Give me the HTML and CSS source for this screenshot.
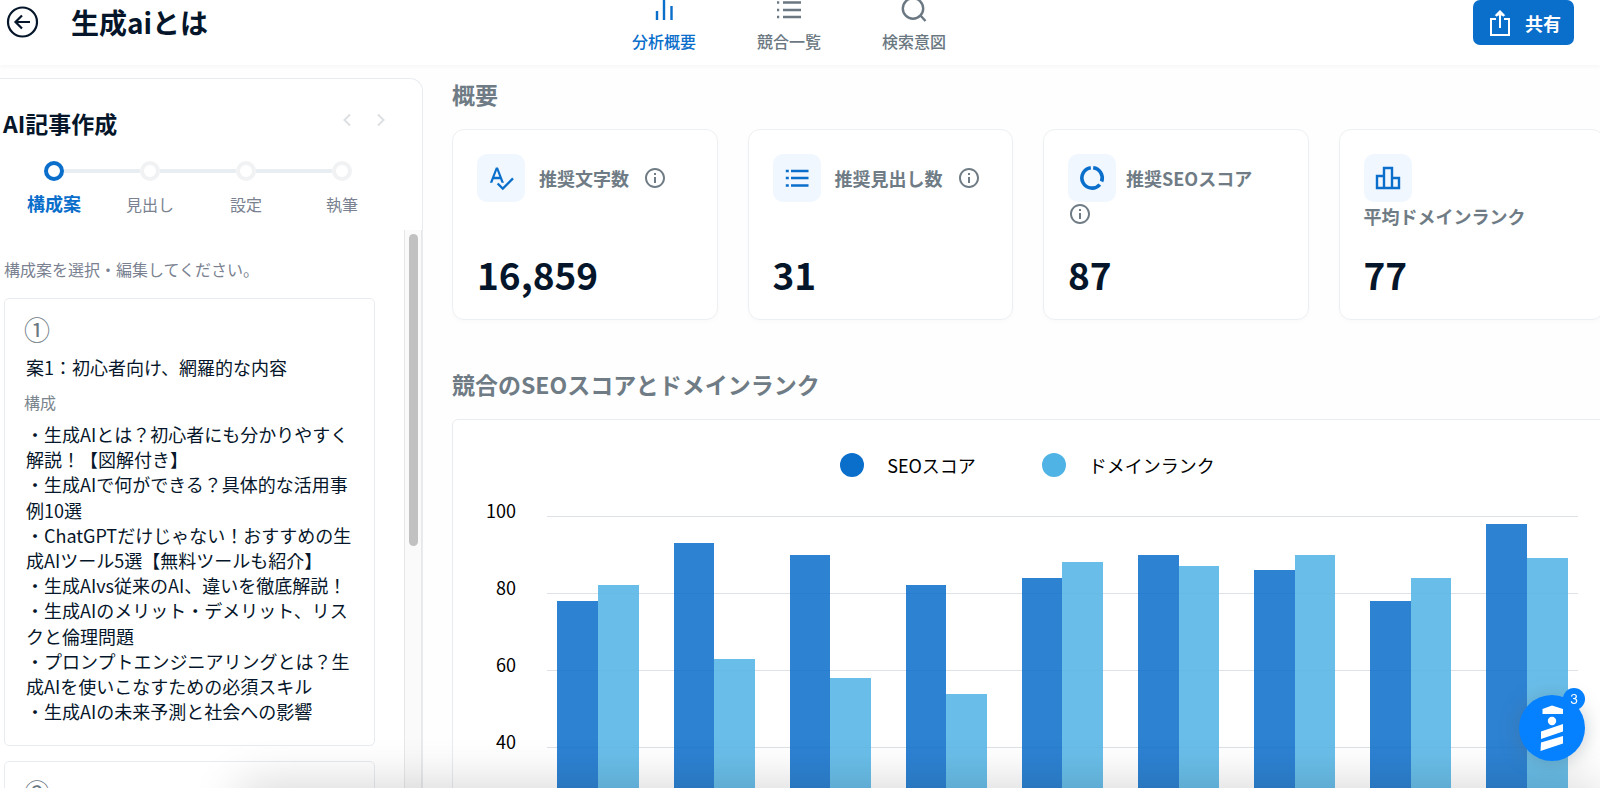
FILE: index.html
```html
<!DOCTYPE html>
<html lang="ja">
<head>
<meta charset="utf-8">
<title>生成aiとは</title>
<link rel="stylesheet" href="styles.css">
</head>
<body>
<header class="header">
  <div class="header-left">
    <button class="icon-button" aria-label="戻る">
      <svg width="36" height="36" viewBox="0 0 36 36" fill="none" stroke="currentColor" stroke-width="2.200"><circle cx="18.500" cy="18" r="14.500"/><path d="M26 18H11.500M18 11.500 11.500 18l6.500 6.500"/></svg>
    </button>
    <h1 class="title">生成aiとは</h1>
  </div>
  <nav class="tabs">
    <a class="tab tab-active" href="#overview">
      <svg width="32" height="32" viewBox="0 0 32 32" fill="none" stroke="currentColor" stroke-width="2.400"><path d="M9 18v9M16 4v23M23.500 13v14"/></svg>
      分析概要
    </a>
    <a class="tab" href="#competitors">
      <svg width="32" height="32" viewBox="0 0 32 32" fill="none" stroke="currentColor" stroke-width="2.400"><path d="M10 9.500h18M10 17h18M10 24h18M4 9.500h2.200M4 17h2.200M4 24h2.200"/></svg>
      競合一覧
    </a>
    <a class="tab" href="#intent">
      <svg width="32" height="32" viewBox="0 0 32 32" fill="none" stroke="currentColor" stroke-width="2.400"><circle cx="15" cy="15.500" r="10.200"/><path d="m22 22 5.500 6"/></svg>
      検索意図
    </a>
  </nav>
  <button class="share">
    <svg width="24" height="28" viewBox="0 0 24 28" fill="none" stroke="currentColor" stroke-width="2"><path d="M8 10H3v16h18V10h-5M12 19V4M8 7l4-4 4 4"/><path d="m9 5.500 3-3 3 3z" fill="currentColor"/></svg>
    共有
  </button>
</header>

<div class="page">
  <aside class="sidebar">
    <div class="sidebar-head">
      <h2 class="sidebar-title">AI記事作成</h2>
      <div class="pager">
        <button class="icon-button" aria-label="前へ"><svg width="14" height="14" viewBox="0 0 14 14" fill="none" stroke="currentColor" stroke-width="2"><path d="M10 1.500 4.500 7l5.500 5.500"/></svg></button>
        <button class="icon-button" aria-label="次へ"><svg width="14" height="14" viewBox="0 0 14 14" fill="none" stroke="currentColor" stroke-width="2"><path d="M4 1.500 9.500 7 4 12.500"/></svg></button>
      </div>
    </div>
    <ol class="steps">
      <li class="step step-active"><span class="dot"></span>構成案</li>
      <li class="step"><span class="dot"></span>見出し</li>
      <li class="step"><span class="dot"></span>設定</li>
      <li class="step"><span class="dot"></span>執筆</li>
    </ol>
    <div class="scroll">
      <div class="scroll-content">
        <p class="hint">構成案を選択・編集してください。</p>
        <article class="plan">
          <div class="plan-number">①</div>
          <h3 class="plan-title">案1：初心者向け、網羅的な内容</h3>
          <div class="plan-label">構成</div>
          <ul class="plan-list">
            <li>・生成AIとは？初心者にも分かりやすく解説！【図解付き】</li>
            <li>・生成AIで何ができる？具体的な活用事例10選</li>
            <li>・ChatGPTだけじゃない！おすすめの生成AIツール5選【無料ツールも紹介】</li>
            <li>・生成AIvs従来のAI、違いを徹底解説！</li>
            <li>・生成AIのメリット・デメリット、リスクと倫理問題</li>
            <li>・プロンプトエンジニアリングとは？生成AIを使いこなすための必須スキル</li>
            <li>・生成AIの未来予測と社会への影響</li>
          </ul>
        </article>
        <article class="plan">
          <div class="plan-number">②</div>
        </article>
      </div>
      <div class="track"><div class="thumb"></div></div>
    </div>
  </aside>

  <main class="main">
    <h2 class="section-title" id="overview">概要</h2>
    <div class="cards">
      <section class="card">
        <div class="card-head">
          <span class="tile"><svg width="28" height="28" viewBox="0 0 24 24" fill="currentColor"><path d="M12.450 16h2.090L9.430 3H7.570L2.460 16h2.090l1.120-3h5.640l1.140 3zm-6.020-5L8.500 5.480 10.570 11H6.430zm15.160.590-8.090 8.090L9.830 16l-1.410 1.410 5.090 5.090L23 13l-1.410-1.410z"/></svg></span>
          <span class="card-label">推奨文字数</span>
          <button class="icon-button info" aria-label="説明"><svg width="24" height="24" viewBox="0 0 24 24" fill="currentColor"><path d="M11 7h2v2h-2zm0 4h2v6h-2zm1-9C6.480 2 2 6.480 2 12s4.480 10 10 10 10-4.480 10-10S17.520 2 12 2zm0 18c-4.410 0-8-3.590-8-8s3.590-8 8-8 8 3.590 8 8-3.590 8-8 8z"/></svg></button>
        </div>
        <div class="card-value">16,859</div>
      </section>
      <section class="card">
        <div class="card-head">
          <span class="tile"><svg width="28" height="28" viewBox="0 0 28 28" fill="none" stroke="currentColor" stroke-width="2.400"><path d="M8 7h17.500M8 14h17.500M8 21.500h17.500M2.800 7h3M2.800 14h3M2.800 21.500h3"/></svg></span>
          <span class="card-label">推奨見出し数</span>
          <button class="icon-button info" aria-label="説明"><svg width="24" height="24" viewBox="0 0 24 24" fill="currentColor"><path d="M11 7h2v2h-2zm0 4h2v6h-2zm1-9C6.480 2 2 6.480 2 12s4.480 10 10 10 10-4.480 10-10S17.520 2 12 2zm0 18c-4.410 0-8-3.590-8-8s3.590-8 8-8 8 3.590 8 8-3.590 8-8 8z"/></svg></button>
        </div>
        <div class="card-value">31</div>
      </section>
      <section class="card">
        <div class="card-head card-head-wrap">
          <span class="tile"><svg width="28" height="28" viewBox="0 0 28 28" fill="none" stroke="currentColor" stroke-width="3.600"><path d="M15.200 3.800A10.200 10.200 0 0 1 23.600 17.500M21.800 20.600A10.200 10.200 0 1 1 12.800 3.800"/></svg></span>
          <span class="card-label">推奨SEOスコア</span>
          <button class="icon-button info" aria-label="説明"><svg width="24" height="24" viewBox="0 0 24 24" fill="currentColor"><path d="M11 7h2v2h-2zm0 4h2v6h-2zm1-9C6.480 2 2 6.480 2 12s4.480 10 10 10 10-4.480 10-10S17.520 2 12 2zm0 18c-4.410 0-8-3.590-8-8s3.590-8 8-8 8 3.590 8 8-3.590 8-8 8z"/></svg></button>
        </div>
        <div class="card-value">87</div>
      </section>
      <section class="card">
        <div class="card-head card-head-wrap">
          <span class="tile"><svg width="28" height="28" viewBox="0 0 28 28" fill="none" stroke="currentColor" stroke-width="2.400"><path d="M3 12h7v12H3zM10 4h8v20h-8zM18 14h7v10h-7z"/></svg></span>
          <span class="card-label">平均ドメインランク</span>
        </div>
        <div class="card-value">77</div>
      </section>
    </div>

    <h2 class="section-title">競合のSEOスコアとドメインランク</h2>
    <section class="chart">
      <div class="legend">
        <span class="legend-item"><i class="swatch seo"></i>SEOスコア</span>
        <span class="legend-item"><i class="swatch rank"></i>ドメインランク</span>
      </div>
      <div class="chart-body">
        <div class="axis"><span>100</span><span>80</span><span>60</span><span>40</span></div>
        <div class="plot">
          <div class="bars">
            <div class="group"><div class="bar seo" style="height:78%"></div><div class="bar rank" style="height:82%"></div></div>
            <div class="group"><div class="bar seo" style="height:93%"></div><div class="bar rank" style="height:63%"></div></div>
            <div class="group"><div class="bar seo" style="height:90%"></div><div class="bar rank" style="height:58%"></div></div>
            <div class="group"><div class="bar seo" style="height:82%"></div><div class="bar rank" style="height:54%"></div></div>
            <div class="group"><div class="bar seo" style="height:84%"></div><div class="bar rank" style="height:88%"></div></div>
            <div class="group"><div class="bar seo" style="height:90%"></div><div class="bar rank" style="height:87%"></div></div>
            <div class="group"><div class="bar seo" style="height:86%"></div><div class="bar rank" style="height:90%"></div></div>
            <div class="group"><div class="bar seo" style="height:78%"></div><div class="bar rank" style="height:84%"></div></div>
            <div class="group"><div class="bar seo" style="height:98%"></div><div class="bar rank" style="height:89%"></div></div>
          </div>
        </div>
      </div>
    </section>
  </main>
</div>

<div class="bottom-shade"></div>
<button class="helper" aria-label="ガイド">
  <svg width="66" height="66" viewBox="0 0 66 66" fill="#fff"><path d="M23.500 19v-5L33 10.500 44 14v5zM22 36.500l22-7.500v7.500L22 44zM22 47.500l22-6.500v7.500L21.500 56z"/><circle cx="33" cy="26" r="4.200"/></svg>
  <span class="badge">3</span>
</button>
</body>
</html>
```
FILE: styles.css
```css
* { box-sizing: border-box; }
body {
  margin: 0;
  height: 100vh;
  overflow: hidden;
  display: flex;
  flex-direction: column;
  background: #fefefe;
  color: #06162a;
  font-family: "Noto Sans CJK JP", "Noto Sans", sans-serif;
  font-size: 18px;
}
h1, h2, h3, p, ul, ol { margin: 0; padding: 0; list-style: none; }
button { border: 0; padding: 0; background: none; color: inherit; font: inherit; }
svg { display: block; flex: none; }
.icon-button { display: block; }

.header {
  flex: none;
  display: grid;
  grid-template-columns: 1fr auto 1fr;
  align-items: start;
  height: 65px;
  padding: 0 26px 0 4px;
  background: #fff;
  box-shadow: 0 2px 4px rgba(0, 0, 0, .03);
  position: relative;
}
.header-left { display: flex; align-items: center; gap: 31px; padding-top: 2px; }
.title { font-size: 28px; font-weight: 700; line-height: 40px; }
.tabs { display: flex; margin-top: -7px; }
.tab {
  display: flex;
  flex-direction: column;
  align-items: center;
  gap: 4px;
  width: 125px;
  color: #6b7882;
  font-size: 16px;
  font-weight: 500;
  line-height: 24px;
  text-decoration: none;
}
.tab-active { color: #0a6ecb; }
.share {
  justify-self: end;
  display: flex;
  align-items: center;
  gap: 13px;
  height: 45px;
  padding: 0 13px 0 15px;
  border-radius: 7px;
  background: #0a6ecb;
  color: #fff;
  font-weight: 700;
}

.page { flex: 1; min-height: 0; display: flex; gap: 29px; }
.sidebar {
  flex: none;
  display: flex;
  flex-direction: column;
  width: 423px;
  margin-top: 13px;
  border: 1px solid #e8ecf0;
  border-width: 1px 1px 0 0;
  border-radius: 0 13px 0 0;
  background: #fff;
}
.sidebar-head { display: flex; justify-content: space-between; padding: 27px 34px 0 3px; }
.sidebar-title { font-size: 23px; font-weight: 700; line-height: 34px; }
.pager { display: flex; align-items: flex-start; gap: 20px; padding-top: 7px; color: #dde0e3; }
.steps { display: grid; grid-template-columns: repeat(4, 96px); padding: 21px 0 0 6px; }
.step {
  display: flex;
  flex-direction: column;
  align-items: center;
  gap: 10px;
  color: #7a8291;
  font-size: 16px;
  line-height: 26px;
  position: relative;
}
.step + .step::before {
  content: "";
  position: absolute;
  top: 8px;
  left: -38px;
  width: 76px;
  height: 4px;
  background: #e8eef1;
}
.step-active { color: #0a6ecb; font-size: 18px; font-weight: 700; line-height: 24px; }
.dot { width: 20px; height: 20px; border: 4px solid #f0f2f4; border-radius: 50%; }
.step-active .dot { border-color: #0a6ecb; }
.scroll { flex: 1; min-height: 0; display: flex; margin-top: 13px; overflow: hidden; }
.scroll-content { flex: 1; padding: 27px 29px 0 4px; }
.hint { color: #7a8291; font-size: 16px; line-height: 24px; }
.plan {
  margin-top: 15px;
  min-height: 160px;
  padding: 12px 19px 21px;
  border: 1px solid #e8ecf0;
  border-radius: 5px;
}
.plan-number { color: #6b7882; font-size: 26px; line-height: 36px; }
.hint + .plan { margin-top: 17px; }
.plan-title { padding: 7px 2px 0; font-size: 18px; font-weight: 400; line-height: 26px; }
.plan-label { padding-top: 10px; color: #7b868e; font-size: 16px; line-height: 24px; }
.plan-list { padding: 8px 0 0 2px; line-height: 1.4; }
.track { flex: none; width: 18px; padding: 4px; border: 1px solid #e8e8e8; border-width: 0 1px; background: #fafafa; }
.thumb { width: 9px; height: 312px; border-radius: 5px; background: #c1c1c1; }

.main { flex: 1; min-width: 0; display: flex; flex-direction: column; padding-top: 11px; overflow: hidden; }
.section-title { color: #6f7c85; font-size: 23px; font-weight: 700; line-height: 36px; }
.cards {
  display: grid;
  grid-template-columns: repeat(4, minmax(0, 1fr));
  gap: 30px;
  margin: 17px -4px 46px 0;
}
.card {
  display: flex;
  flex-direction: column;
  height: 191px;
  padding: 24px;
  border: 1px solid #edf0f2;
  border-radius: 12px;
  background: #fff;
  box-shadow: 0 2px 5px rgba(0, 0, 0, .02);
}
.card-head { flex: 1; display: flex; flex-wrap: wrap; align-items: center; align-content: flex-start; column-gap: 14px; }
.card-head-wrap { column-gap: 10px; }
.tile {
  display: grid;
  place-items: center;
  width: 48px;
  height: 48px;
  border-radius: 10px;
  background: #f0f7ff;
  color: #0a6ecb;
}
.card-label { color: #6f7c85; font-weight: 700; line-height: 28px; }
.info { color: #6f7c85; }
.card-value { font-size: 37px; font-weight: 700; line-height: 42px; }

.chart {
  flex: none;
  margin: 17px -20px 0 0;
  padding: 32px 41px 0 31px;
  border: 1px solid #e8ecf0;
  border-radius: 6px;
  background: #fff;
}
.legend { display: flex; justify-content: center; gap: 66px; padding-right: 7px; color: #000; line-height: 26px; }
.legend-item { display: flex; align-items: center; gap: 23px; }
.swatch { width: 24px; height: 24px; border-radius: 50%; }
.seo { background: #0a6ecb; }
.rank { background: #50b3e5; }
.chart-body { display: flex; gap: 31px; padding-top: 38px; }
.axis { display: flex; flex-direction: column; width: 32px; color: #000; text-align: right; line-height: 77px; margin-top: -44px; }
.plot {
  flex: 1;
  height: 386px;
  background: repeating-linear-gradient(#dfe1e8 0 1px, transparent 1px 77px);
}
.bars { display: grid; grid-template-columns: repeat(9, 1fr); height: 100%; margin: 0 -7px; }
.group { display: flex; align-items: flex-end; justify-content: center; }
.bar { width: 35%; opacity: .86; }

.bottom-shade {
  position: fixed;
  left: 240px;
  right: 0;
  bottom: -40px;
  height: 40px;
  box-shadow: 0 0 50px rgba(0, 0, 0, .2);
  pointer-events: none;
}
.helper {
  position: fixed;
  right: 15px;
  bottom: 27px;
  width: 66px;
  height: 66px;
  border-radius: 50%;
  background: #0580ff;
  box-shadow: 0 2px 20px rgba(90, 100, 110, .35);
}
.badge {
  position: absolute;
  top: -7px;
  right: 0;
  width: 22px;
  height: 22px;
  border-radius: 50%;
  background: #0580ff;
  color: #fff;
  font: 13px/22px Inter, sans-serif;
}
```
